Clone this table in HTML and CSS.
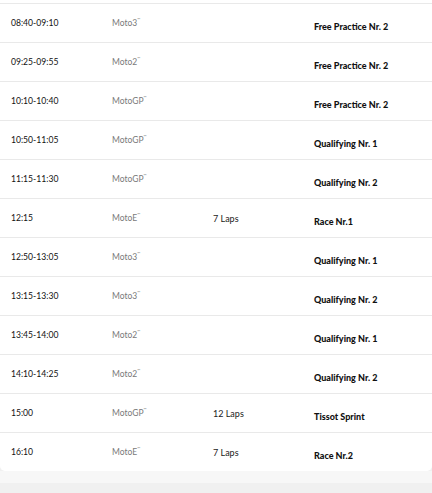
FILE: index.html
```html
<!DOCTYPE html>
<html>
<head>
<meta charset="utf-8">
<link rel="stylesheet" href="styles.css">
</head>
<body>
<div class="card">
  <div class="row top"></div>
  <div class="row"><span class="time">08:40-09:10</span><span class="cls">Moto3<sup>™</sup></span><span class="laps"></span><span class="sess">Free Practice Nr. 2</span></div>
  <div class="row"><span class="time">09:25-09:55</span><span class="cls">Moto2<sup>™</sup></span><span class="laps"></span><span class="sess">Free Practice Nr. 2</span></div>
  <div class="row"><span class="time">10:10-10:40</span><span class="cls">MotoGP<sup>™</sup></span><span class="laps"></span><span class="sess">Free Practice Nr. 2</span></div>
  <div class="row"><span class="time">10:50-11:05</span><span class="cls">MotoGP<sup>™</sup></span><span class="laps"></span><span class="sess">Qualifying Nr. 1</span></div>
  <div class="row"><span class="time">11:15-11:30</span><span class="cls">MotoGP<sup>™</sup></span><span class="laps"></span><span class="sess">Qualifying Nr. 2</span></div>
  <div class="row"><span class="time">12:15</span><span class="cls">MotoE<sup>™</sup></span><span class="laps">7 Laps</span><span class="sess">Race Nr.1</span></div>
  <div class="row"><span class="time">12:50-13:05</span><span class="cls">Moto3<sup>™</sup></span><span class="laps"></span><span class="sess">Qualifying Nr. 1</span></div>
  <div class="row"><span class="time">13:15-13:30</span><span class="cls">Moto3<sup>™</sup></span><span class="laps"></span><span class="sess">Qualifying Nr. 2</span></div>
  <div class="row"><span class="time">13:45-14:00</span><span class="cls">Moto2<sup>™</sup></span><span class="laps"></span><span class="sess">Qualifying Nr. 1</span></div>
  <div class="row"><span class="time">14:10-14:25</span><span class="cls">Moto2<sup>™</sup></span><span class="laps"></span><span class="sess">Qualifying Nr. 2</span></div>
  <div class="row"><span class="time">15:00</span><span class="cls">MotoGP<sup>™</sup></span><span class="laps">12 Laps</span><span class="sess">Tissot Sprint</span></div>
  <div class="row last"><span class="time">16:10</span><span class="cls">MotoE<sup>™</sup></span><span class="laps">7 Laps</span><span class="sess">Race Nr.2</span></div>
</div>
<div class="strip"></div>
</body>
</html>
```
FILE: styles.css
```css
html, body {
  margin: 0;
  padding: 0;
  background: #f0f0f0;
  font-family: Lato, "Noto Sans", sans-serif;
}
.card {
  background: #ffffff;
  border-radius: 0 0 5px 5px;
}
.row {
  display: grid;
  grid-template-columns: repeat(4, 1fr);
  align-items: center;
  height: 38px;
  padding: 0 17px 0 11px;
  border-bottom: 1px solid #e9e9e9;
  box-sizing: content-box;
}
.row.top {
  height: 3px;
}
.row.last {
  border-bottom: none;
}
.time {
  font-size: 8.6px;
  color: #111;
}
.cls {
  font-size: 8.5px;
  color: #7a7a7a;
}
.cls sup {
  font-size: 4px;
  vertical-align: top;
  position: relative;
  top: -1px;
}
.laps {
  font-size: 9px;
  color: #1a1a1a;
}
.sess {
  font-size: 9px;
  font-weight: 900;
  color: #111;
  padding-top: 7px;
}
.strip {
  height: 12px;
  background: #f7f7f7;
}
```
